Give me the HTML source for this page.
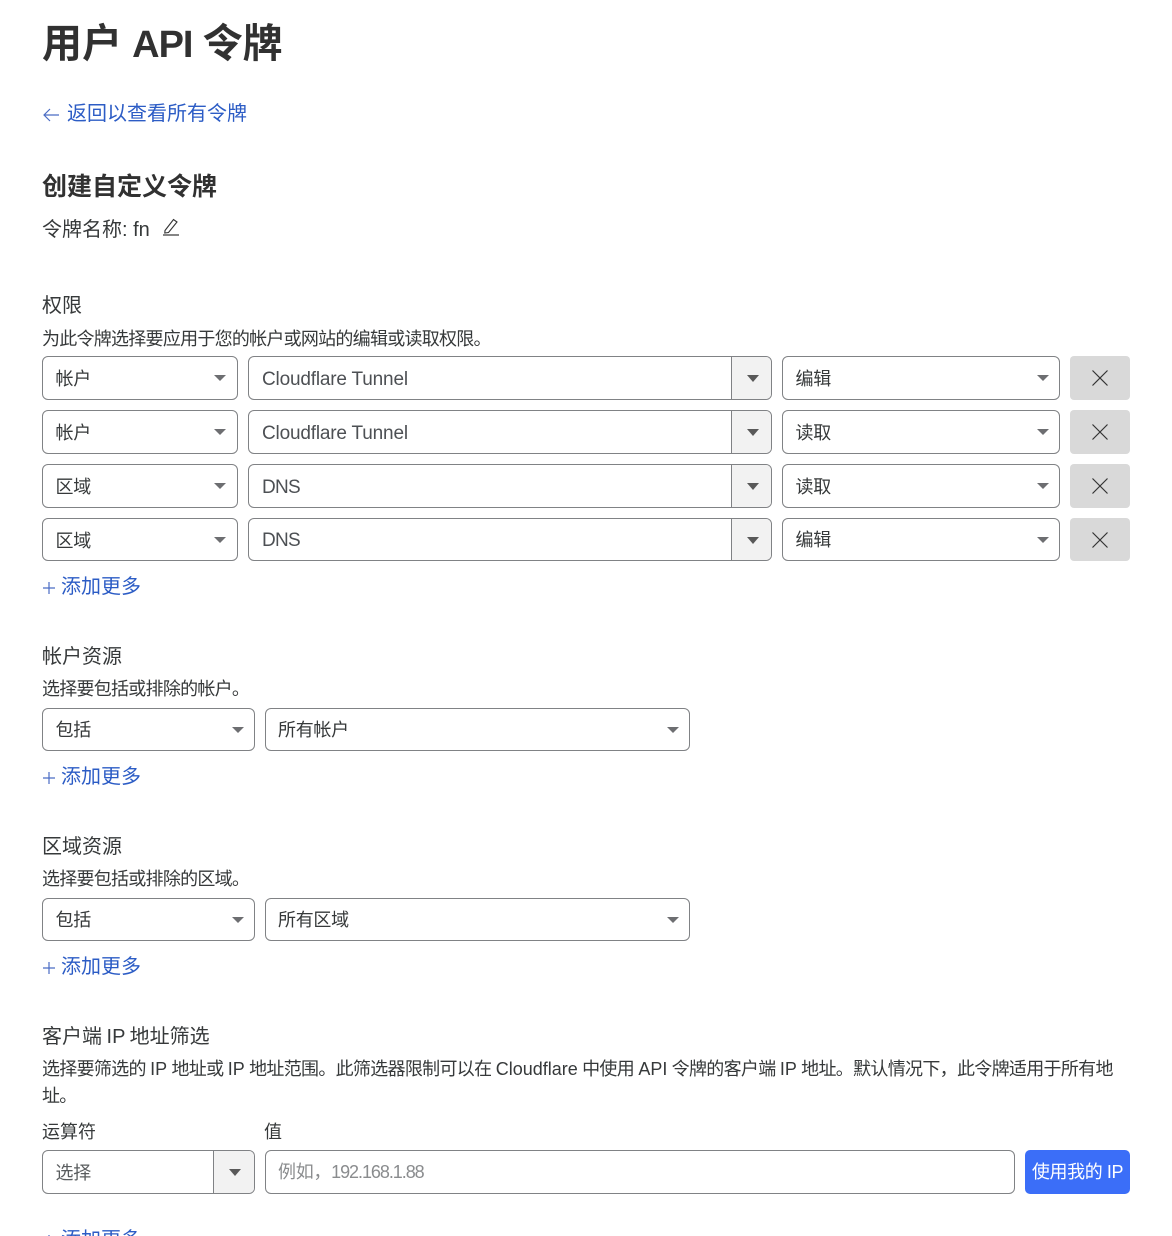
<!DOCTYPE html>
<html lang="zh-CN"><head><meta charset="utf-8"><title>用户 API 令牌</title>
<style>
html,body{margin:0;padding:0;background:#fff;overflow:hidden}
body{width:1172px;height:1236px;position:relative;font-family:"Liberation Sans","Noto Sans CJK SC",sans-serif;color:#36393a}
.t{position:absolute;white-space:nowrap}
h1,h2{margin:0;font-weight:700;color:#313131}
.l{font-size:20px;line-height:26px;color:#36393a}
.d{font-size:18px;line-height:26px;color:#36393a;letter-spacing:-.74px}
.d span{letter-spacing:0}
.a{font-size:20px;line-height:26px;color:#2c5cc5}
.b{position:absolute;box-sizing:border-box;border:1px solid #808285;border-radius:6px;background:#fff;font-size:18px;line-height:45px;padding-left:12.500px;color:#36393a;white-space:nowrap;overflow:hidden;letter-spacing:-.3px}
.b.n{font-size:19px;color:#4d5054;letter-spacing:-.18px;padding-left:13px}
.b:after{content:"";position:absolute;right:10px;top:18px;border:6px solid transparent;border-bottom:0;border-top:6px solid #6d6e71}
.b.f:after{right:11px}
.c:after{display:none}
.c i{position:absolute;right:0;top:0;bottom:0;width:39px;background:#f2f2f2;border-left:1px solid #808285}
.c i:after{content:"";position:absolute;left:15px;top:18px;border:6px solid transparent;border-bottom:0;border-top:7px solid #595959}
.x{position:absolute;left:1070px;width:60px;height:44px;background:#d9d9d9;border-radius:4px}
.x svg{position:absolute;left:21px;top:13px}
.p{vertical-align:-1px;margin:0 6px 0 1px}
</style></head><body>
<h1 class="t" style="left:42px;top:17px;font-size:40px;line-height:54px;word-spacing:-1px">用户 <span style="font-size:38px;letter-spacing:-1px">API</span> 令牌</h1>
<div class="t a" style="left:42px;top:101px"><svg width="18" height="14" viewBox="0 0 18 14" style="vertical-align:-2px;margin-right:7px"><path d="M17 7H2M8 1L2 7l6 6" fill="none" stroke="#4a6cc4" stroke-width="1.2"/></svg>返回以查看所有令牌</div>
<h2 class="t" style="left:42px;top:171px;font-size:25px;line-height:33px">创建自定义令牌</h2>
<div class="t l" style="left:42px;top:217px">令牌名称: fn</div>
<svg class="t" style="left:162px;top:218px" width="18" height="18" viewBox="0 0 18 18"><path d="M3 12.5L11.5 1.5l3.5 2.500L6.500 14.500 2.800 15z" fill="none" stroke="#333" stroke-width="1.100"/><path d="M1 17h16" stroke="#333" stroke-width="1.200"/></svg>

<div class="t l" style="left:42px;top:293px">权限</div>
<div class="t d" style="left:42px;top:326px">为此令牌选择要应用于您的帐户或网站的编辑或读取权限。</div>

<div class="b f" style="left:42px;top:356px;width:196px;height:44px">帐户</div>
<div class="b n c" style="left:248px;top:356px;width:524px;height:44px">Cloudflare Tunnel<i></i></div>
<div class="b" style="left:782px;top:356px;width:278px;height:44px">编辑</div>
<div class="x" style="top:356px"><svg width="18" height="18" viewBox="0 0 18 18"><path d="M1.500 1.500l15 15M16.500 1.500l-15 15" stroke="#333" stroke-width="1.200"/></svg></div>

<div class="b f" style="left:42px;top:410px;width:196px;height:44px">帐户</div>
<div class="b n c" style="left:248px;top:410px;width:524px;height:44px">Cloudflare Tunnel<i></i></div>
<div class="b" style="left:782px;top:410px;width:278px;height:44px">读取</div>
<div class="x" style="top:410px"><svg width="18" height="18" viewBox="0 0 18 18"><path d="M1.500 1.500l15 15M16.500 1.500l-15 15" stroke="#333" stroke-width="1.200"/></svg></div>

<div class="b f" style="left:42px;top:464px;width:196px;height:44px">区域</div>
<div class="b n c" style="left:248px;top:464px;width:524px;height:44px;letter-spacing:-.7px">DNS<i></i></div>
<div class="b" style="left:782px;top:464px;width:278px;height:44px">读取</div>
<div class="x" style="top:464px"><svg width="18" height="18" viewBox="0 0 18 18"><path d="M1.500 1.500l15 15M16.500 1.500l-15 15" stroke="#333" stroke-width="1.200"/></svg></div>

<div class="b f" style="left:42px;top:518px;width:196px;height:43px">区域</div>
<div class="b n c" style="left:248px;top:518px;width:524px;height:43px;line-height:43px;letter-spacing:-.7px">DNS<i></i></div>
<div class="b" style="left:782px;top:518px;width:278px;height:43px;line-height:43px">编辑</div>
<div class="x" style="top:518px;height:43px"><svg width="18" height="18" viewBox="0 0 18 18"><path d="M1.500 1.500l15 15M16.500 1.500l-15 15" stroke="#333" stroke-width="1.200"/></svg></div>

<div class="t a" style="left:42px;top:574px"><svg class="p" width="12" height="12" viewBox="0 0 12 12"><path d="M6 0v12M0 6h12" stroke="#4a6cc4" stroke-width="1.200"/></svg>添加更多</div>

<div class="t l" style="left:42px;top:644px">帐户资源</div>
<div class="t d" style="left:42px;top:676px">选择要包括或排除的帐户。</div>
<div class="b" style="left:42px;top:708px;width:213px;height:43px;line-height:43px">包括</div>
<div class="b" style="left:265px;top:708px;width:425px;height:43px;padding-left:12px;line-height:43px">所有帐户</div>
<div class="t a" style="left:42px;top:764px"><svg class="p" width="12" height="12" viewBox="0 0 12 12"><path d="M6 0v12M0 6h12" stroke="#4a6cc4" stroke-width="1.200"/></svg>添加更多</div>

<div class="t l" style="left:42px;top:834px">区域资源</div>
<div class="t d" style="left:42px;top:866px">选择要包括或排除的区域。</div>
<div class="b" style="left:42px;top:898px;width:213px;height:43px;line-height:43px">包括</div>
<div class="b" style="left:265px;top:898px;width:425px;height:43px;padding-left:12px;line-height:43px">所有区域</div>
<div class="t a" style="left:42px;top:954px"><svg class="p" width="12" height="12" viewBox="0 0 12 12"><path d="M6 0v12M0 6h12" stroke="#4a6cc4" stroke-width="1.200"/></svg>添加更多</div>

<div class="t l" style="left:42px;top:1024px;word-spacing:-1px">客户端 IP 地址筛选</div>
<div class="t d" style="left:42px;top:1056px;width:1100px;line-height:27px;letter-spacing:-.69px">选择要筛选的 <span>IP</span> 地址或 <span>IP</span> 地址范围。此筛选器限制可以在 <span>Cloudflare</span> 中使用 <span>API</span> 令牌的客户端 <span>IP</span> 地址。默认情况下，此令牌适用于所有地<br>址。</div>
<div class="t" style="left:42px;top:1119px;font-size:18px;line-height:26px">运算符</div>
<div class="t" style="left:264px;top:1119px;font-size:18px;line-height:26px">值</div>
<div class="b c" style="left:42px;top:1150px;width:213px;height:44px;color:#595c5e">选择<i style="width:40px"></i></div>
<div class="b c" style="left:265px;top:1150px;width:750px;height:44px;padding-left:12px;color:#8a8c8e;line-height:43px">例如，<span style="letter-spacing:-1.050px">192.168.1.88</span></div>
<div class="t" style="left:1025px;top:1150px;width:105px;height:44px;background:#3b6ef8;border-radius:5px;color:#fff;font-size:18px;line-height:44px;text-align:center;letter-spacing:-.4px">使用我的 IP</div>
<div class="t a" style="left:42px;top:1227px"><svg class="p" width="12" height="12" viewBox="0 0 12 12"><path d="M6 0v12M0 6h12" stroke="#4a6cc4" stroke-width="1.200"/></svg>添加更多</div>
</body></html>
